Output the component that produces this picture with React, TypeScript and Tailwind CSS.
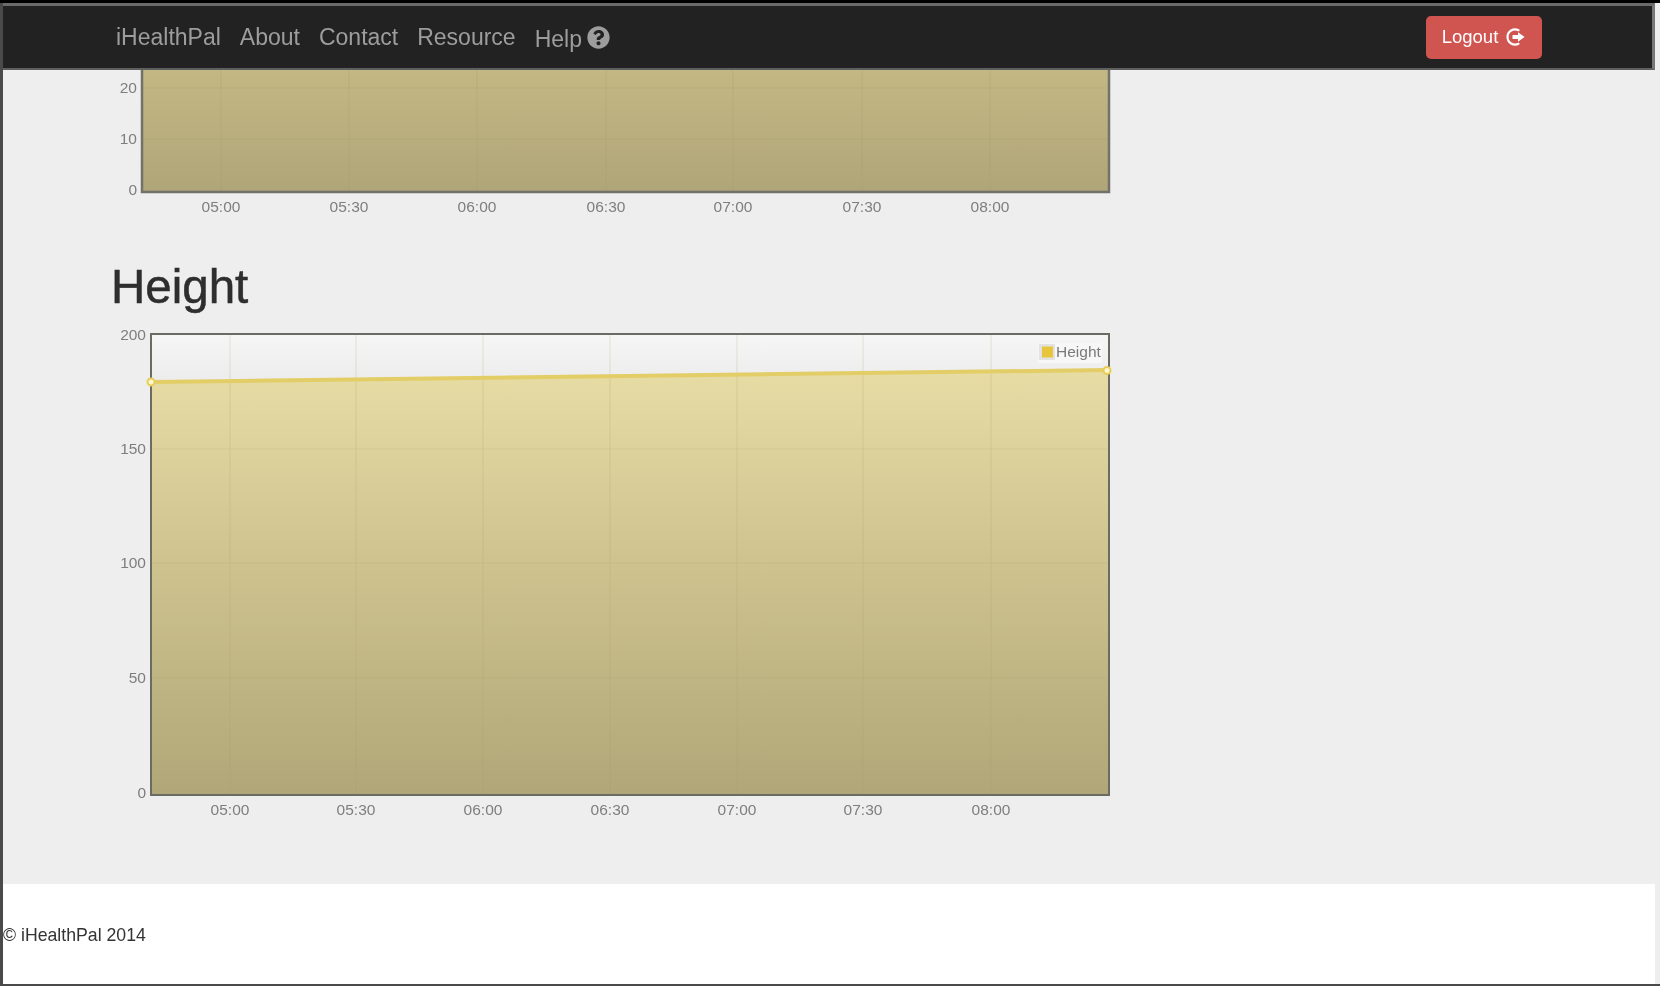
import { FaQuestionCircle } from 'react-icons/fa';

const navItems = ['iHealthPal', 'About', 'Contact', 'Resource'];
const times = ['05:00', '05:30', '06:00', '06:30', '07:00', '07:30', '08:00'];

function LogoutIcon() {
  return (
    <svg width="20" height="20" viewBox="0 0 20 20" fill="none">
      <path d="M12.5 3.2A7.6 7.6 0 1 0 12.5 16.8" stroke="white" strokeWidth="2.2" strokeLinecap="round" />
      <path d="M6.5 8h5.5V5.2L18.6 10 12 14.800V12H6.500z" fill="white" />
    </svg>
  );
}

function AxisLabels({ xs, xY, ys }: { xs: number[]; xY: number; ys: { label: string; x: number; y: number }[] }) {
  return (
    <g fill="#7e7e7e" fontSize="15.5" fontFamily="'Liberation Sans', Arial, sans-serif">
      {times.map((t, i) => (
        <text key={t} x={xs[i]} y={xY} textAnchor="middle">
          {t}
        </text>
      ))}
      {ys.map((l) => (
        <text key={l.label} x={l.x} y={l.y} textAnchor="end">
          {l.label}
        </text>
      ))}
    </g>
  );
}

function TopChart() {
  const xs = [221, 349, 477, 606, 733, 862, 990];
  return (
    <svg className="ml-[107px] block shrink-0" width="1005" height="150" viewBox="110 70 1005 150">
      <defs>
        <linearGradient id="topFill" x1="0" y1="0" x2="0" y2="1">
          <stop offset="0" stopColor="#c5b985" />
          <stop offset="1" stopColor="#b0a578" />
        </linearGradient>
      </defs>
      <rect x="142" y="60" width="967" height="132" fill="url(#topFill)" />
      {xs.map((x) => (
        <line key={x} x1={x} x2={x} y1="70" y2="192" stroke="#a89c6c" strokeOpacity="0.35" />
      ))}
      {[88, 139].map((y) => (
        <line key={y} x1="142" x2="1109" y1={y} y2={y} stroke="#a89c6c" strokeOpacity="0.3" />
      ))}
      <path d="M142 60V192H1109V60" fill="none" stroke="#72726a" strokeWidth="2.500" />
      <AxisLabels
        xs={xs}
        xY={212}
        ys={[
          { label: '20', x: 137, y: 93 },
          { label: '10', x: 137, y: 144 },
          { label: '0', x: 137, y: 195 },
        ]}
      />
    </svg>
  );
}

function HeightChart() {
  const xs = [230, 356, 483, 610, 737, 863, 991];
  return (
    <svg className="ml-[107px] block shrink-0" width="1005" height="500" viewBox="110 325 1005 500">
      <defs>
        <linearGradient id="plotBg" gradientUnits="userSpaceOnUse" x1="0" y1="334" x2="0" y2="382">
          <stop offset="0" stopColor="#f6f6f6" />
          <stop offset="1" stopColor="#ececec" />
        </linearGradient>
        <linearGradient id="areaFill" x1="0" y1="0" x2="0" y2="1">
          <stop offset="0" stopColor="#e7dca4" />
          <stop offset="1" stopColor="#b0a677" />
        </linearGradient>
      </defs>
      <rect x="151" y="334" width="958" height="461" fill="url(#plotBg)" />
      <path d="M151 382L1109 370V795H151z" fill="url(#areaFill)" />
      {xs.map((x) => (
        <line key={x} x1={x} x2={x} y1="334" y2="795" stroke="#a89c6c" strokeOpacity="0.16" strokeWidth="1.5" />
      ))}
      {[449, 563, 678].map((y) => (
        <line key={y} x1="151" x2="1109" y1={y} y2={y} stroke="#a89c6c" strokeOpacity="0.16" />
      ))}
      <rect x="151" y="334" width="958" height="461" fill="none" stroke="#6b6b64" strokeWidth="2" />
      <path d="M151 382L1109 370" stroke="#e3cd67" strokeWidth="4" />
      <circle cx="151" cy="382" r="3.500" fill="#fdf6d0" stroke="#e8cd55" strokeWidth="2" />
      <circle cx="1107" cy="370.500" r="3.500" fill="#fdf6d0" stroke="#e8cd55" strokeWidth="2" />
      <rect x="1038" y="343" width="64" height="20" fill="#f7f7f7" />
      <rect x="1039" y="344" width="16" height="16" fill="#e2e2e2" />
      <rect x="1042" y="346.500" width="11" height="11" fill="#e8c53a" />
      <text x="1056" y="356.500" fill="#7a7a7a" fontSize="15.500" fontFamily="'Liberation Sans', Arial, sans-serif">
        Height
      </text>
      <AxisLabels
        xs={xs}
        xY={815}
        ys={[
          { label: '200', x: 146, y: 340 },
          { label: '150', x: 146, y: 454 },
          { label: '100', x: 146, y: 568 },
          { label: '50', x: 146, y: 683 },
          { label: '0', x: 146, y: 798 },
        ]}
      />
    </svg>
  );
}

export default function App() {
  return (
    <div className="flex h-[986px] w-[1660px] flex-col overflow-hidden bg-[#eeeeee] font-['Liberation_Sans',Arial,sans-serif] blur-[0.5px]">
      <div className="h-[3px] shrink-0 bg-black" />
      <div className="flex flex-1 flex-col border-l-[3px] border-l-[#4a4a4a]">
        <nav className="mr-[5px] flex h-[67px] shrink-0 items-center border-t-[3px] border-b-[2px] border-r-[3px] border-t-[#6a6a6a] border-b-[#5f5f5f] border-r-[#777777] bg-[#222222] pl-[113px]">
          <div className="flex items-center gap-[19px] text-[23px] text-[#9d9d9d]">
            {navItems.map((item) => (
              <span key={item}>{item}</span>
            ))}
            <span className="mt-1 flex items-center gap-[5px]">
              Help
              <FaQuestionCircle className="-mt-1 text-[23px]" />
            </span>
          </div>
          <button className="mr-[110px] ml-auto flex h-[43px] w-[116px] items-center justify-center gap-[8px] rounded-[5px] bg-[#d0544f] text-[18.5px] text-white">
            Logout
            <LogoutIcon />
          </button>
        </nav>
        <main className="flex flex-1 flex-col overflow-hidden">
          <TopChart />
          <h1 className="mt-[29px] ml-[108px] h-[76px] text-[47.5px] leading-[76px] font-normal text-[#2e2e2e] [-webkit-text-stroke:0.5px_#2e2e2e]">
            Height
          </h1>
          <HeightChart />
        </main>
        <footer className="mr-[5px] flex h-[100px] shrink-0 items-center bg-white pt-[2px] text-[17.7px] text-[#333333]">
          © iHealthPal 2014
        </footer>
        <div className="h-[2px] shrink-0 bg-[#4a4a4a]" />
      </div>
    </div>
  );
}
